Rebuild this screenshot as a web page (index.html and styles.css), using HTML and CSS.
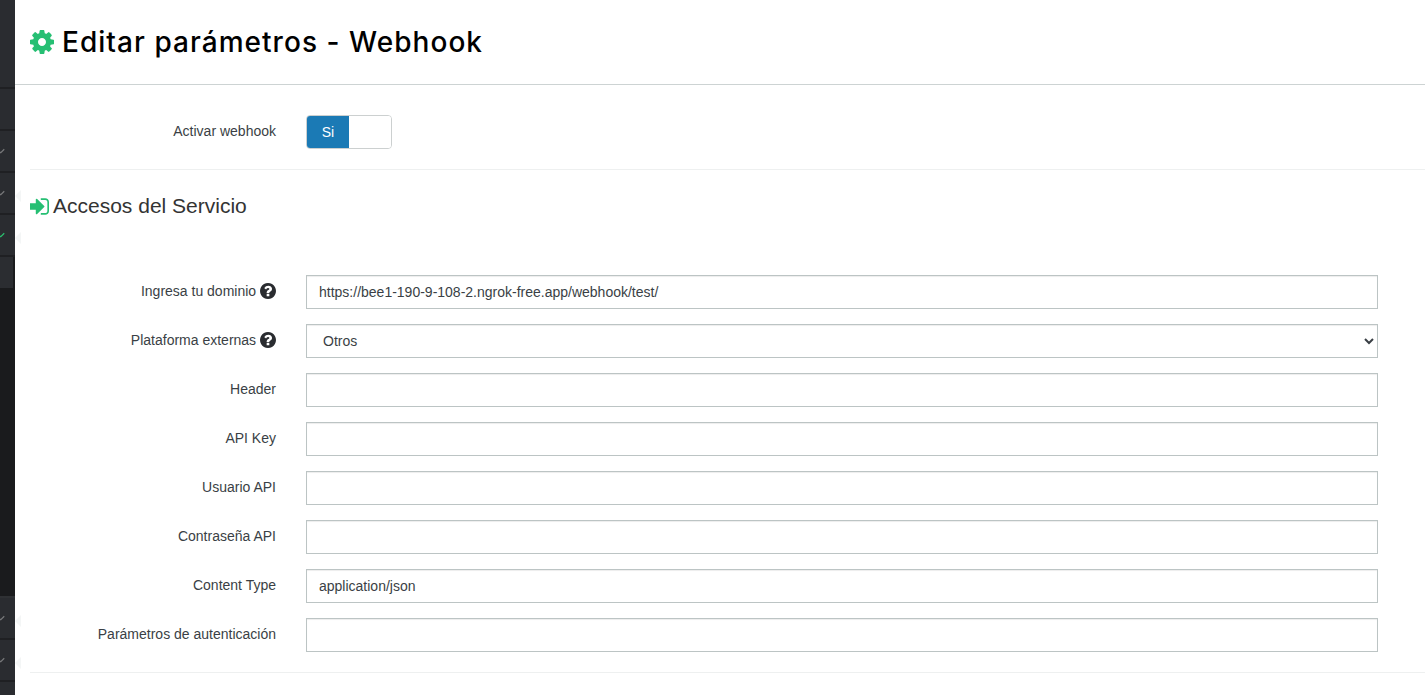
FILE: index.html
```html
<!DOCTYPE html>
<html lang="es">
<head>
<meta charset="utf-8">
<title>Editar parámetros - Webhook</title>
<link rel="stylesheet" href="styles.css">
</head>
<body>
<div class="app">
  <aside class="sidebar">
    <div class="side-top"></div>
    <div class="side-item"></div>
    <div class="side-item"><svg class="check" viewBox="0 0 8 6"><path d="M0 3.5 2 5 6 1"/></svg></div>
    <div class="side-item"><svg class="check" viewBox="0 0 8 6"><path d="M0 3.5 2 5 6 1"/></svg><i class="notch"></i></div>
    <div class="side-item"><svg class="check check-on" viewBox="0 0 8 6"><path d="M0 3.5 2 5 6 1"/></svg><i class="notch"></i></div>
    <div class="side-panel"></div>
    <div class="side-dark"></div>
    <div class="side-item"><svg class="check" viewBox="0 0 8 6"><path d="M0 3.5 2 5 6 1"/></svg><i class="notch"></i></div>
    <div class="side-item"><svg class="check" viewBox="0 0 8 6"><path d="M0 3.5 2 5 6 1"/></svg><i class="notch"></i></div>
    <div class="side-item side-last"></div>
  </aside>
  <main class="main">
    <header class="page-head">
      <h1 class="page-title">
        <svg class="ico-cog" viewBox="128 128 1536 1536"><path d="M1152 896q0-106-75-181t-181-75-181 75-75 181 75 181 181 75 181-75 75-181zm512-109v222q0 12-8 23t-20 13l-185 28q-19 54-39 91 35 50 107 138 10 12 10 25t-9 23q-27 37-99 108t-94 71q-12 0-26-9l-138-108q-44 23-91 38-16 136-29 186-7 28-36 28h-222q-14 0-24.5-8.5t-11.5-21.5l-28-184q-49-16-90-37l-141 107q-10 9-25 9-14 0-25-11-126-114-165-168-7-10-7-23 0-12 8-23 15-21 51-66.5t54-70.5q-27-50-41-99l-183-27q-13-2-21-12.5t-8-23.5v-222q0-12 8-23t19-13l186-28q14-46 39-92-40-57-107-138-10-12-10-24 0-10 9-23 26-36 98.5-107.5t94.5-71.5q13 0 26 10l138 107q44-23 91-38 16-136 29-186 7-28 36-28h222q14 0 24.5 8.5t11.5 21.5l28 184q49 16 90 37l142-107q9-9 24-9 13 0 25 10 129 119 165 170 7 8 7 22 0 12-8 23-15 21-51 66.5t-54 70.5q26 50 41 98l183 28q13 2 21 12.5t8 23.5z"/></svg>
        <span>Editar parámetros - Webhook</span>
      </h1>
    </header>
    <form class="form">
      <div class="row">
        <label class="label">Activar webhook</label>
        <div class="switch"><span class="switch-on">Si</span><span class="switch-off"></span></div>
      </div>
      <hr class="rule">
      <h2 class="section-title">
        <svg class="ico-signin" viewBox="64 256 1472 1280"><path d="M1184 896q0 26-19 45l-544 544q-19 19-45 19t-45-19-19-45v-288h-448q-26 0-45-19t-19-45v-384q0-26 19-45t45-19h448v-288q0-26 19-45t45-19 45 19l544 544q19 19 19 45zm352-352v704q0 119-84.5 203.5t-203.5 84.5h-320q-13 0-22.5-9.5t-9.5-22.5q0-4-1-20t-.5-26.5 3-23.5 10-19.5 20.5-6.5h320q66 0 113-47t47-113v-704q0-66-47-113t-113-47h-312l-11.5-1-11.5-3-8-5.5-7-9-2-13.5q0-4-1-20t-.5-26.5 3-23.5 10-19.5 20.5-6.5h320q119 0 203.5 84.5t84.5 203.5z"/></svg>
        <span>Accesos del Servicio</span>
      </h2>
      <div class="fields">
        <div class="row">
          <label class="label">Ingresa tu dominio <svg class="ico-help" viewBox="128 128 1536 1536"><path d="M1024 1376v-192q0-14-9-23t-23-9h-192q-14 0-23 9t-9 23v192q0 14 9 23t23 9h192q14 0 23-9t9-23zm256-672q0-88-55.5-163t-138.5-116-170-41q-243 0-371 213-15 24 8 42l132 100q7 6 19 6 16 0 25-12 53-68 86-92 34-24 86-24 48 0 85.5 26t37.5 59q0 38-20 61t-68 45q-63 28-115.5 86.5t-52.5 125.5v36q0 14 9 23t23 9h192q14 0 23-9t9-23q0-19 21.5-49.5t54.5-49.5q32-18 49-28.5t46-35 44.5-48 28-60.5 12.5-81zm384 192q0 209-103 385.5t-279.5 279.5-385.5 103-385.5-103-279.5-279.5-103-385.5 103-385.5 279.5-279.5 385.5-103 385.5 103 279.5 279.5 103 385.5z"/></svg></label>
          <input class="control" type="text" value="https://bee1-190-9-108-2.ngrok-free.app/webhook/test/">
        </div>
        <div class="row">
          <label class="label">Plataforma externas <svg class="ico-help" viewBox="128 128 1536 1536"><path d="M1024 1376v-192q0-14-9-23t-23-9h-192q-14 0-23 9t-9 23v192q0 14 9 23t23 9h192q14 0 23-9t9-23zm256-672q0-88-55.5-163t-138.5-116-170-41q-243 0-371 213-15 24 8 42l132 100q7 6 19 6 16 0 25-12 53-68 86-92 34-24 86-24 48 0 85.5 26t37.5 59q0 38-20 61t-68 45q-63 28-115.5 86.5t-52.5 125.5v36q0 14 9 23t23 9h192q14 0 23-9t9-23q0-19 21.5-49.5t54.5-49.5q32-18 49-28.5t46-35 44.5-48 28-60.5 12.5-81zm384 192q0 209-103 385.5t-279.5 279.5-385.5 103-385.5-103-279.5-279.5-103-385.5 103-385.5 279.5-279.5 385.5-103 385.5 103 279.5 279.5 103 385.5z"/></svg></label>
          <select class="control"><option>Otros</option></select>
        </div>
        <div class="row"><label class="label">Header</label><input class="control" type="text"></div>
        <div class="row"><label class="label">API Key</label><input class="control" type="text"></div>
        <div class="row"><label class="label">Usuario API</label><input class="control" type="text"></div>
        <div class="row"><label class="label">Contraseña API</label><input class="control" type="text"></div>
        <div class="row"><label class="label">Content Type</label><input class="control" type="text" value="application/json"></div>
        <div class="row"><label class="label">Parámetros de autenticación</label><input class="control" type="text"></div>
      </div>
      <hr class="rule">
    </form>
  </main>
</div>
</body>
</html>
```
FILE: styles.css
```css
* { box-sizing: border-box; }
html, body { margin: 0; height: 100%; overflow: hidden; background: #fff; }
body { font: 14px/20px "Liberation Sans", Arial, sans-serif; color: #3a3f45; }
.app { display: flex; height: 695px; }

.sidebar { width: 15px; flex: none; display: flex; flex-direction: column; background: #2a2c30; }
.side-top { height: 89px; border-bottom: 2px solid #1f2023; flex: none; }
.side-item { height: 42px; flex: none; position: relative; border-bottom: 2px solid #1f2023; }
.side-last { flex: 1; height: auto; border-bottom: 0; }
.check { position: absolute; left: -1px; top: 17px; width: 7px; height: 6px; fill: none; stroke: #77787a; stroke-width: 1.4; }
.check-on { stroke: #2bbf6f; }
.notch { position: absolute; left: 15px; top: 17px; width: 0; height: 0; border-style: solid; border-width: 6px 6px 6px 0; border-color: transparent #f4f6f6 transparent transparent; }
.side-panel { height: 31px; flex: none; background: #2b2d31; border-right: 2px solid #1a1b1d; }
.side-dark { height: 310px; flex: none; background: #1a1b1d; border-bottom: 2px solid #2f3134; }

.main { flex: 1; min-width: 0; }
.page-head { height: 85px; border-bottom: 1px solid #cdd3d3; padding: 0 15px; display: flex; align-items: center; }
.page-title { margin: 0; display: flex; align-items: center; gap: 8px; font: 500 28px/34px Inter, "DejaVu Sans", sans-serif; letter-spacing: 1.04px; color: #000; }
.ico-cog { width: 24px; height: 24px; fill: #26bf73; }

.form { padding: 30px 0 0 15px; }
.row { display: grid; grid-template-columns: 261px 1072px; column-gap: 30px; margin-left: -15px; align-items: center; min-height: 34px; }
.label { text-align: right; display: block; position: relative; top: -1px; }
.switch { display: flex; width: 86px; height: 34px; border: 1px solid #ccd0d0; border-radius: 4px; overflow: hidden; }
.switch-on { width: 42px; background: #1b7ab5; color: #fff; text-align: center; line-height: 32px; }
.switch-off { flex: 1; background: #fff; }
.rule { border: 0; border-top: 1px solid #eef0f0; margin: 20px 0 0; }
.section-title { margin: 24px 0 0; display: flex; align-items: center; gap: 4px; font: 400 21px/24px "Liberation Sans", Arial, sans-serif; color: #333; }
.ico-signin { width: 19px; height: 17px; fill: #26bf73; }
.fields { margin-top: 57px; display: flex; flex-direction: column; gap: 15px; }
.control { width: 100%; height: 34px; border: 1px solid #bcc4c4; border-radius: 0; background: #fff; color: #3a3f45; font: 14px "Liberation Sans", Arial, sans-serif; padding: 6px 12px; margin: 0; box-shadow: inset 0 1px 1px rgba(0,0,0,.075); outline: 0; }
.ico-help { width: 16px; height: 16px; fill: #2a2c30; vertical-align: -3px; }
```
